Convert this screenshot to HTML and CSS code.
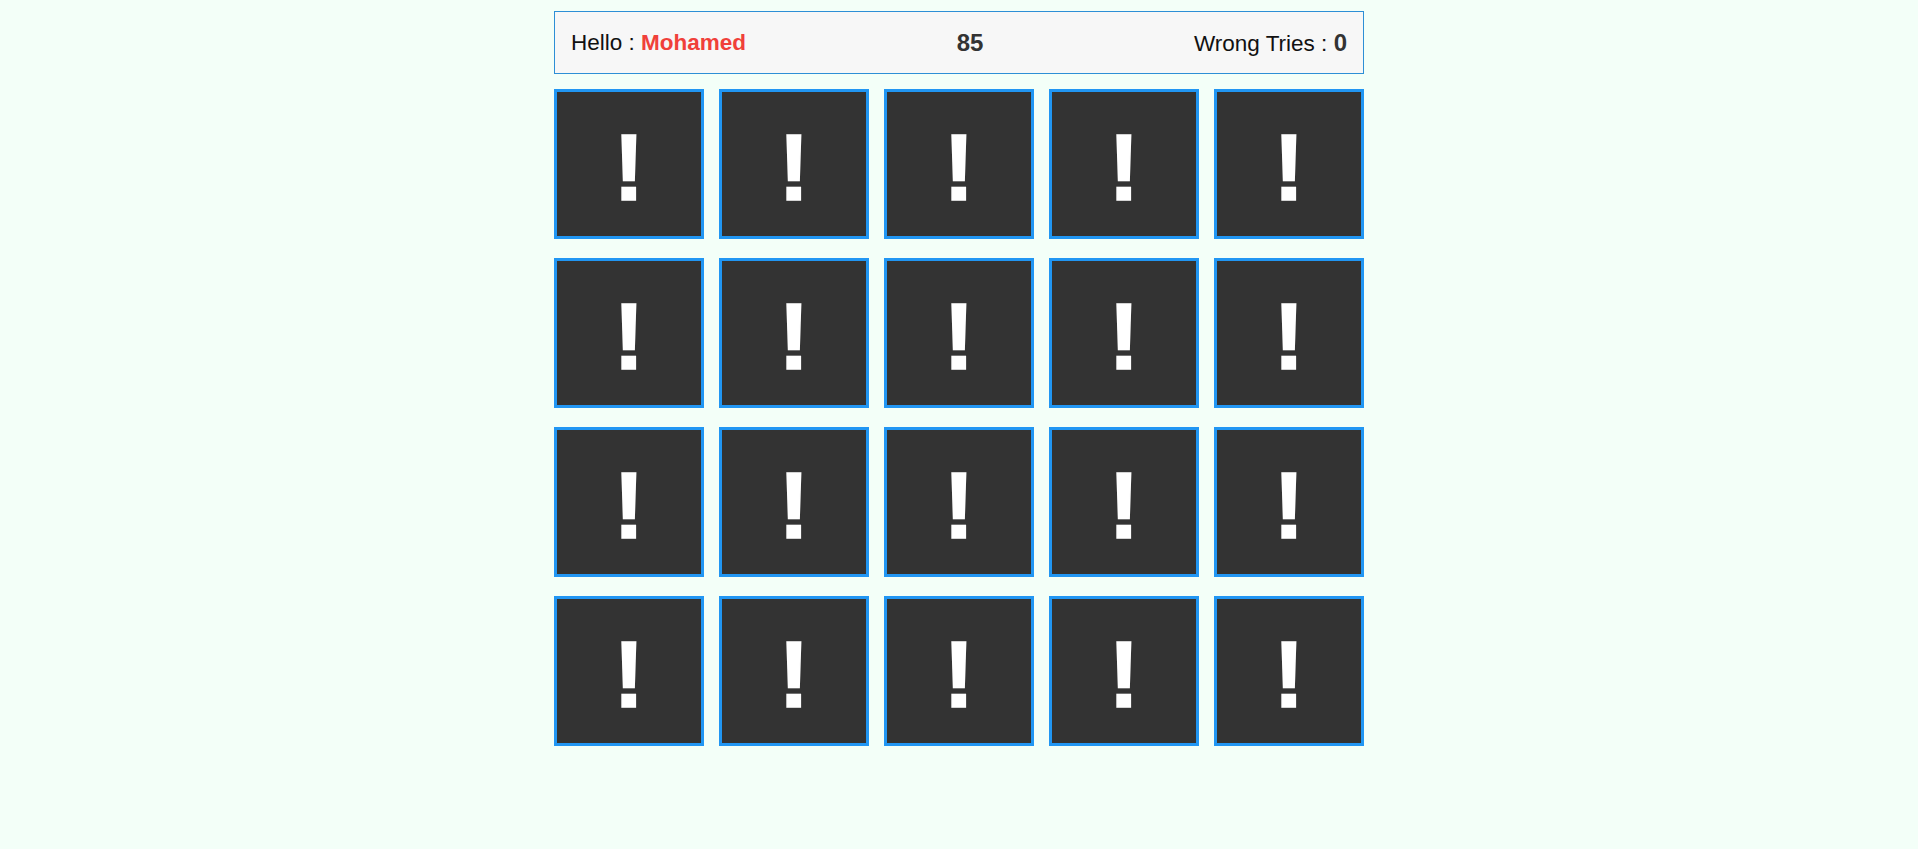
FILE: index.html
```html
<!DOCTYPE html>
<html lang="en">
<head>
<meta charset="utf-8">
<title>Memory Game</title>
<link rel="stylesheet" href="styles.css">
</head>
<body>
<div class="game">
  <div class="info">
    <div class="name">Hello : <span class="player">Mohamed</span></div>
    <div class="timer">85</div>
    <div class="tries">Wrong Tries : <span class="count">0</span></div>
  </div>
  <div class="board">
    <div class="card"><span class="mark">!</span></div>
    <div class="card"><span class="mark">!</span></div>
    <div class="card"><span class="mark">!</span></div>
    <div class="card"><span class="mark">!</span></div>
    <div class="card"><span class="mark">!</span></div>
    <div class="card"><span class="mark">!</span></div>
    <div class="card"><span class="mark">!</span></div>
    <div class="card"><span class="mark">!</span></div>
    <div class="card"><span class="mark">!</span></div>
    <div class="card"><span class="mark">!</span></div>
    <div class="card"><span class="mark">!</span></div>
    <div class="card"><span class="mark">!</span></div>
    <div class="card"><span class="mark">!</span></div>
    <div class="card"><span class="mark">!</span></div>
    <div class="card"><span class="mark">!</span></div>
    <div class="card"><span class="mark">!</span></div>
    <div class="card"><span class="mark">!</span></div>
    <div class="card"><span class="mark">!</span></div>
    <div class="card"><span class="mark">!</span></div>
    <div class="card"><span class="mark">!</span></div>
  </div>
</div>
</body>
</html>
```

FILE: styles.css
```css
* {
  box-sizing: border-box;
}

html, body {
  margin: 0;
  padding: 0;
}

body {
  background: #f3fff8;
  font-family: "Liberation Sans", Arial, sans-serif;
  color: #111;
}

.game {
  width: 810px;
  margin: 0 auto;
  padding-top: 11px;
}

.info {
  height: 63px;
  display: flex;
  align-items: center;
  justify-content: space-between;
  padding: 0 16px 0 16px;
  background: #f7f7f7;
  border: 1px solid #2d8fd6;
  font-size: 22.5px;
}

.player {
  color: #f0403a;
  font-weight: bold;
}

.timer {
  font-size: 24px;
  font-weight: bold;
  color: #333;
}

.count {
  font-size: 24px;
  font-weight: bold;
  color: #333;
}

.board {
  margin-top: 15px;
  display: grid;
  grid-template-columns: repeat(5, 150px);
  column-gap: 15px;
  row-gap: 19px;
}

.card {
  width: 150px;
  height: 150px;
  background: #333;
  border: 3px solid #2196f3;
  display: flex;
  align-items: center;
  justify-content: center;
  padding-top: 7px;
}

.mark {
  color: #fff;
  font-size: 94px;
  font-weight: bold;
  line-height: 1;
  -webkit-text-stroke: 1.5px #fff;
}
```
